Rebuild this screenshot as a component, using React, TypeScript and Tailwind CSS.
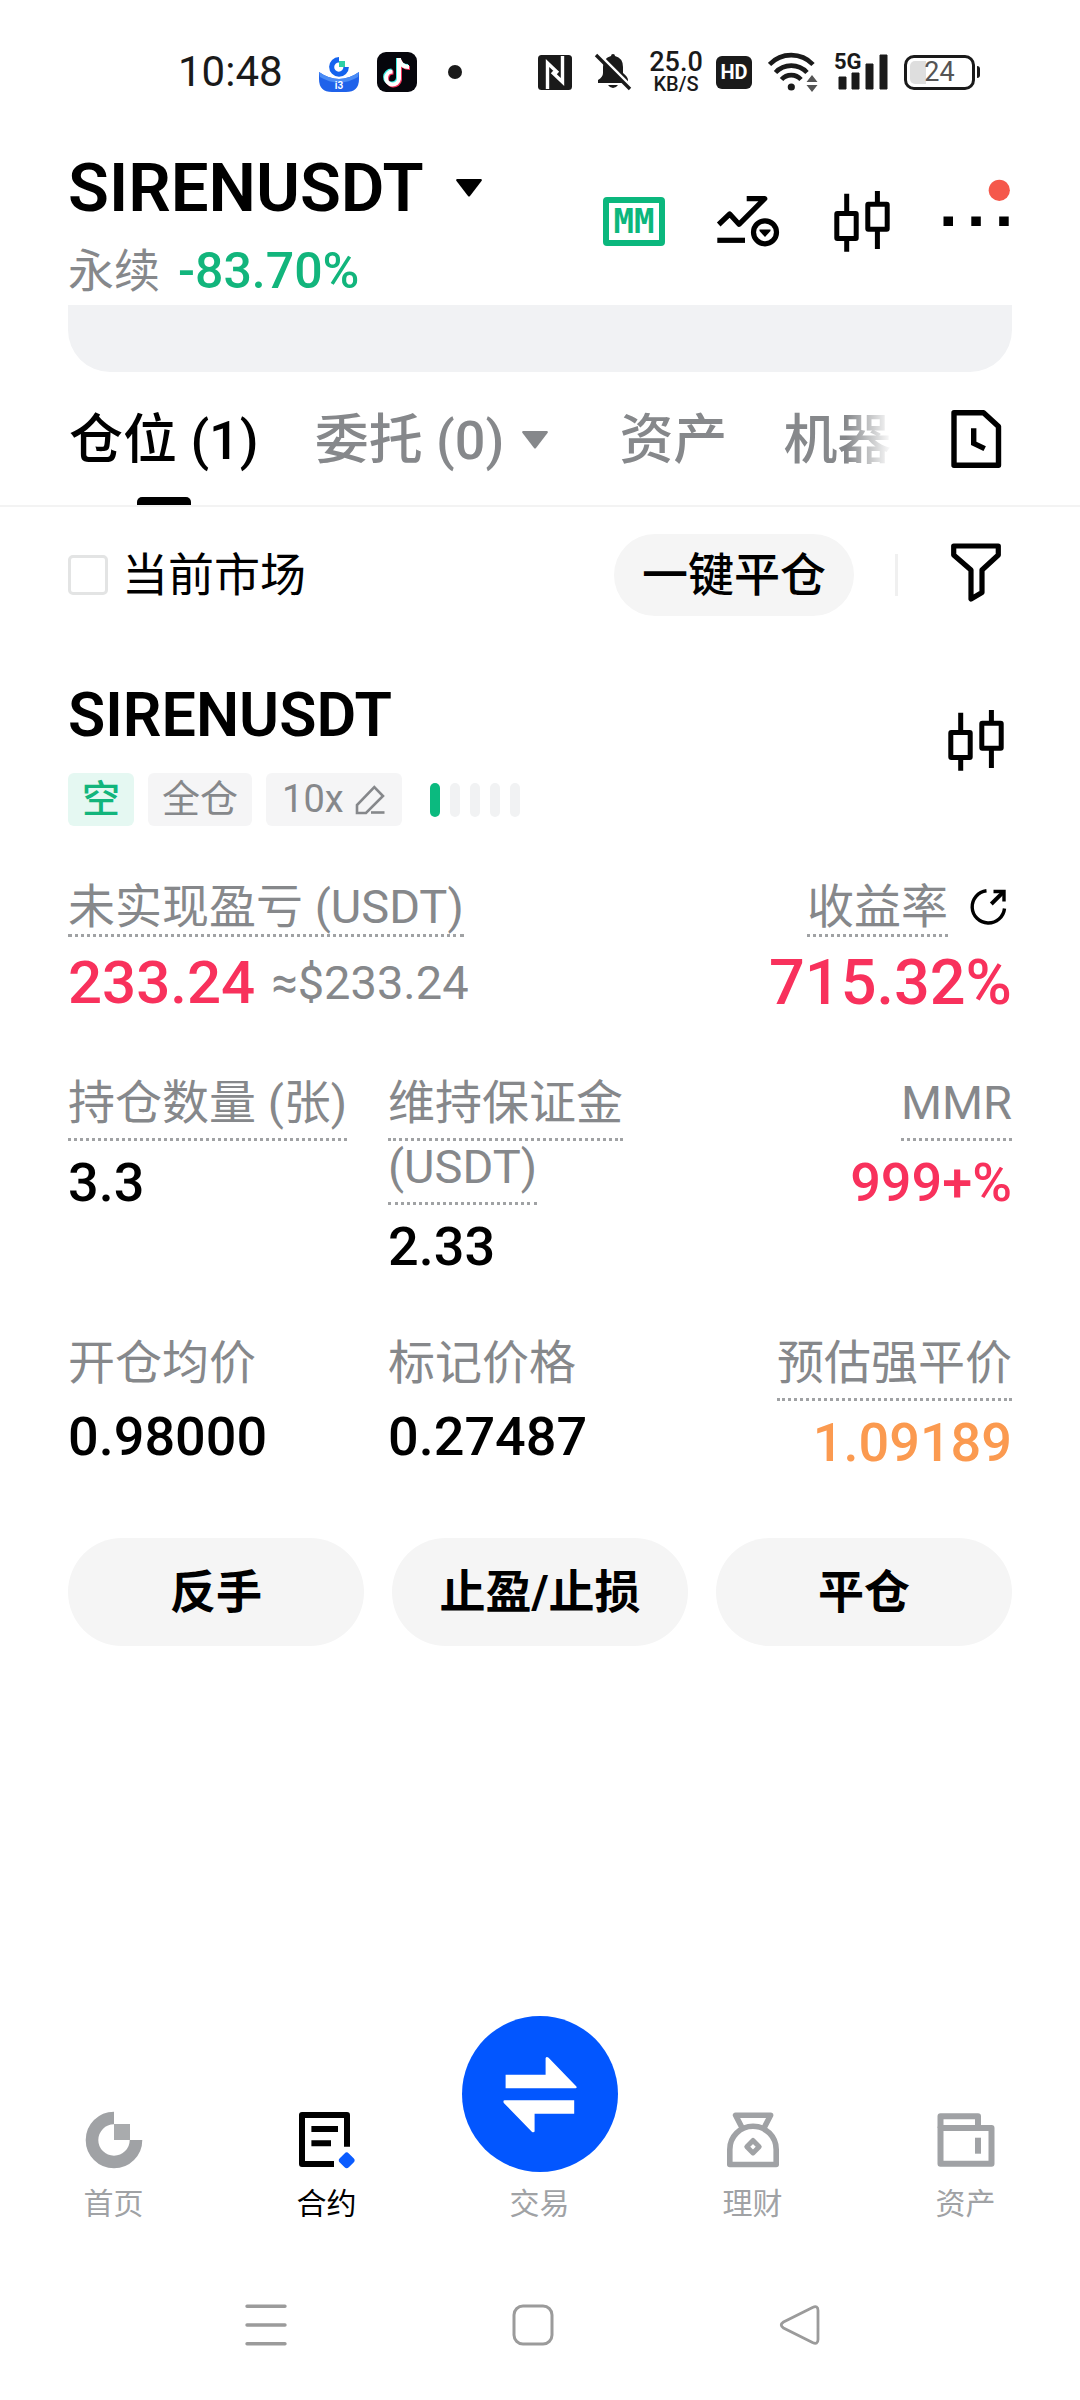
import React, { useState } from 'react';

interface StatProps {
  label: string;
  value: string;
  hint?: boolean;
  align?: 'left' | 'right';
  tone?: string;
}

const CandleIcon: React.FC = () => (
  <svg viewBox="0 0 72 72" className="w-18 h-18" fill="none" stroke="currentColor" strokeWidth="5">
    <rect x="10.8" y="28.5" width="19.4" height="25" rx="0.5" />
    <path d="M20.7 8.7V28M20.7 54V66.7" />
    <rect x="41.8" y="19.2" width="19.4" height="25" rx="0.5" />
    <path d="M51.4 6V19M51.4 44V64" />
  </svg>
);

const Caret: React.FC = () => (
  <svg viewBox="0 0 26 18" className="w-[26px] h-[18px] shrink-0" fill="currentColor">
    <path d="M1 0H25Q26.5 0.5 25.5 2L14 17Q13 18.2 12 17L0.5 2Q-0.5 0.5 1 0Z" />
  </svg>
);

function StatusBar() {
  return (
    <div className="flex items-center justify-between h-36 pl-[178px] pr-[100px] text-[#1a1a1a]">
      <div className="flex items-center">
        <span className="text-[42px] leading-none">10:48</span>
        <svg viewBox="0 0 40 40" className="w-10 h-10 ml-9 overflow-visible">
          <path d="M20 10.5V5A9.9 9.9 0 1 0 29.9 15H24.4A4.6 4.6 0 1 1 20 10.5Z" fill="#1463ee" />
          <rect x="20" y="9" width="6" height="6" fill="#2fd0a5" />
          <path d="M0 20Q20 34 40 20V27Q40 40 27 40H13Q0 40 0 27Z" fill="#1f62ea" />
          <path d="M0 20Q20 34 40 20L39 25Q20 36 1 25Z" fill="#4b8cf5" />
          <text x="20" y="37" fontSize="10" fontWeight="700" textAnchor="middle" fill="#fff">i3</text>
        </svg>
        <svg viewBox="0 0 40 40" className="w-10 h-10 ml-[18px]" fill="none">
          <rect width="40" height="40" rx="9" fill="#06060c" />
          <g strokeWidth="4">
            <path d="M21 6V26A6.5 6.5 0 1 1 14.5 18.5M21 7Q23 14 31 14" stroke="#3ff0e6" />
            <path d="M23 8V28A6.5 6.5 0 1 1 16.5 20.5M23 9Q25 16 33 16" stroke="#f5345c" />
            <path d="M22 6V27A6.5 6.5 0 1 1 15.5 19.5M22 7Q24 15 32 15" stroke="#fff" />
          </g>
        </svg>
        <span className="w-[14px] h-[14px] ml-[31px] rounded-full bg-[#1a1a1a]" />
      </div>

      <div className="flex items-center">
        {/* NFC */}
        <svg viewBox="0 0 34 35" className="w-[34px] h-[35px]" fill="none">
          <rect width="34" height="35" rx="3.5" fill="#1a1a1a" />
          <path d="M9.5 34V8L20 18M24.5 1V27L14 17" stroke="#fff" strokeWidth="3.4" />
        </svg>
        {/* Muted bell */}
        <svg viewBox="0 0 38 38" className="w-[38px] h-[38px] ml-[22px]" fill="#1a1a1a">
          <path d="M17 3Q17 1 19 1Q21 1 21 3Q29 5 29 14V20Q34 24 34 27V30H4V27Q9 24 9 20V14Q9 5 17 3ZM14 32H24Q22 35 19 35Q16 35 14 32Z" />
          <path d="M3 0L38 35" stroke="#fff" strokeWidth="4" />
          <path d="M2 2L36 36" stroke="#1a1a1a" strokeWidth="3.4" />
        </svg>
        <span className="flex flex-col items-center w-14 ml-4 font-medium">
          <span className="text-[27px] leading-[24px]">25.0</span>
          <span className="text-[20px] leading-[20px]">KB/S</span>
        </span>
        <span className="flex items-center justify-center w-9 h-[33px] ml-3 rounded-[6px] bg-[#1a1a1a] text-white text-[20px] font-bold leading-none">
          HD
        </span>
        {/* Wi-Fi */}
        <svg viewBox="0 0 50 40" className="w-[50px] h-10 ml-4" fill="none" stroke="#1a1a1a" strokeWidth="4.6">
          <path d="M1.5 12.5A30 30 0 0 1 45 12.5" />
          <path d="M7.5 20.5A21.5 21.5 0 0 1 39 20.5" />
          <path d="M13.5 27.5A13 13 0 0 1 33 27.5" />
          <circle cx="23.3" cy="35" r="3.6" fill="#1a1a1a" stroke="none" />
          <path d="M38.5 30L44 23L49.5 30ZM38.5 33L44 40L49.5 33Z" fill="#555" stroke="none" />
        </svg>
        <svg viewBox="0 0 54 40" className="w-[54px] h-10 ml-4 overflow-visible" fill="#1a1a1a">
          <text x="0" y="17" fontSize="22" fontWeight="700">5G</text>
          <path d="M5 25H12V37H5ZM18 21H25V37H18ZM32 12H39V37H32ZM46 3H53V37H46Z" stroke="#1a1a1a" strokeWidth="1" strokeLinejoin="round" />
        </svg>
        <span className="flex items-center ml-4">
          <span className="relative flex items-center justify-center w-[71px] h-[35px] rounded-[10px] border-[3px] border-[#1a1a1a]">
            <span className="absolute left-[3px] top-[3px] w-4 h-[23px] rounded-l-[5px] bg-[#dedede]" />
            <span className="relative text-[27px] leading-none text-[#555]">24</span>
          </span>
          <span className="w-[3px] h-3 ml-[2px] rounded-r bg-[#1a1a1a]" />
        </span>
      </div>
    </div>
  );
}

function Header() {
  return (
    <header>
      <div className="flex items-start justify-between px-[68px] h-[161px]">
        <div>
          <button className="flex items-center gap-8 text-[67px] leading-[88px] font-semibold">
            SIRENUSDT
            <Caret />
          </button>
          <div className="flex items-center gap-[18px] mt-[7px] text-[46px] leading-[64px]">
            <span className="text-[#86888b]">永续</span>
            <span className="text-[50px] font-medium text-[#12b57c]">-83.70%</span>
          </div>
        </div>
        <div className="flex items-center gap-[42px] mt-[41px]">
          <button aria-label="MM" className="flex items-center justify-center w-18 h-18">
            <span className="flex items-center justify-center w-[62px] h-[49px] rounded-[4px] border-6 border-[#0bb77d] text-[#0bb77d] text-[34px] leading-none font-bold font-['DejaVu_Sans_Mono',monospace]">
              MM
            </span>
          </button>
          <button aria-label="指标">
            <svg viewBox="0 0 72 72" className="w-18 h-18" fill="none" stroke="currentColor" strokeWidth="5.2">
              <path d="M6.7 39.5L17.7 29L27 39.3L52.7 13.7H34.7" strokeLinejoin="round" />
              <path d="M5.3 55.3H33" />
              <circle cx="53" cy="47.3" r="11.5" />
              <path d="M47.5 44.5H58.5V46L53 52L47.5 46Z" fill="currentColor" stroke="none" />
            </svg>
          </button>
          <button aria-label="K线">
            <CandleIcon />
          </button>
          <button aria-label="更多">
            <svg viewBox="0 0 72 72" className="w-18 h-18 overflow-visible" fill="currentColor">
              <path d="M3.5 31.5H13V41H3.5ZM31.3 31.5H40.8V41H31.3ZM59.2 31.5H68.7V41H59.2Z" />
              <circle cx="59.3" cy="5.3" r="10.6" fill="#f5584b" />
            </svg>
          </button>
        </div>
      </div>
      <div className="h-[67px] mx-[68px] rounded-b-[42px] bg-[#f1f2f4]" />
    </header>
  );
}

function Tabs() {
  return (
    <nav className="flex items-center h-[135px] pl-[69px] pr-[68px] border-b-2 border-[#f3f3f3] text-[54px] text-[#86888b]">
      <div className="relative flex flex-1 items-center h-full pt-[3px] overflow-hidden whitespace-nowrap">
        <button className="relative h-full shrink-0 text-black font-medium">
          仓位 (1)
          <span className="absolute bottom-0 left-1/2 -translate-x-1/2 w-[54px] h-2 rounded-t-[5px] bg-black" />
        </button>
        <button className="flex items-center shrink-0 gap-[18px] ml-14 font-medium">
          委托 (0)
          <Caret />
        </button>
        <button className="shrink-0 ml-[71px] font-medium">资产</button>
        <button className="shrink-0 ml-14 font-medium">机器</button>
        <span className="absolute right-0 top-0 w-[46px] h-full bg-linear-to-r from-white/0 to-white" />
      </div>
      <button aria-label="历史记录" className="ml-12 text-black">
        <svg viewBox="0 0 72 72" className="w-18 h-18" fill="none" stroke="currentColor" strokeWidth="5.4">
          <path d="M14 9.7H43.5L58.5 23.5V62.3H14Z" strokeLinejoin="round" />
          <path d="M33.7 25.3V40.3L44.7 45.7" />
        </svg>
      </button>
    </nav>
  );
}

function FilterRow() {
  const [onlyCurrent, setOnlyCurrent] = useState(false);

  return (
    <div className="flex items-center px-[68px] pt-[27px] text-[46px]">
      <label className="flex items-center gap-[14px]">
        <input
          type="checkbox"
          checked={onlyCurrent}
          onChange={(e) => setOnlyCurrent(e.target.checked)}
          className="appearance-none w-10 h-10 rounded-[5px] border-3 border-[#e3e4e4] checked:bg-black"
        />
        当前市场
      </label>
      <button className="ml-auto h-[82px] px-[28px] rounded-full bg-[#f5f5f5] font-medium">一键平仓</button>
      <span className="w-[3px] h-[42px] ml-[41px] bg-[#f0f0f0]" />
      <button aria-label="筛选" className="ml-[42px]">
        <svg viewBox="0 0 72 72" className="w-18 h-18" fill="none" stroke="currentColor" strokeWidth="5.2" strokeLinejoin="round">
          <path d="M13.7 7H58.3V16L42 31V53.5L31 60V31L13.7 16Z" />
        </svg>
      </button>
    </div>
  );
}

const Stat: React.FC<StatProps> = ({ label, value, hint, align = 'left', tone = 'text-black' }) => (
  <div className={align === 'right' ? 'text-right' : 'text-left'}>
    <div className="text-[47px] leading-[64px] text-[#86888b]">
      <span className={hint ? 'pb-2 border-b-3 border-dotted border-[#a0a2a4]' : ''}>{label}</span>
    </div>
    <div className={`${hint ? 'mt-4' : 'mt-[10px]'} text-[54px] leading-[64px] font-medium ${tone}`}>{value}</div>
  </div>
);

function PositionCard() {
  return (
    <section className="px-[68px] mt-[57px]">
      <div className="flex items-start justify-between">
        <div>
          <h2 className="text-[61px] leading-[84px] font-semibold">SIRENUSDT</h2>
          <div className="flex items-center mt-4 text-[38px] leading-[53px] text-[#86888b]">
            <span className="px-[14px] rounded-[6px] bg-[#e5f8f2] text-[#12b57c] font-medium">空</span>
            <span className="ml-[14px] px-[14px] rounded-[6px] bg-[#f5f5f6]">全仓</span>
            <button className="flex items-center gap-[10px] ml-[14px] px-4 rounded-[6px] bg-[#f5f5f6]">
              10x
              <svg viewBox="0 0 32 32" className="w-8 h-8" fill="none" stroke="currentColor" strokeWidth="2.6">
                <path d="M3 29V21L20.3 3L29 12L12 29Z" />
                <path d="M17 28.5H30.5" />
              </svg>
            </button>
            <span className="flex gap-[10px] ml-[28px]">
              <span className="w-[10px] h-[34px] rounded-full bg-[#0bba7f]" />
              {[1, 2, 3, 4].map((i) => (
                <span key={i} className="w-[10px] h-[34px] rounded-full bg-[#f1f2f3]" />
              ))}
            </span>
          </div>
        </div>
        <button aria-label="K线" className="mt-[31px]">
          <CandleIcon />
        </button>
      </div>

      <div className="flex justify-between mt-[49px]">
        <div>
          <div className="text-[47px] leading-[64px] text-[#86888b]">
            <span className="border-b-3 border-dotted border-[#a0a2a4]">未实现盈亏 (USDT)</span>
          </div>
          <div className="flex items-center gap-4 mt-2 text-[60px] leading-[72px] font-medium text-[#f8315c]">
            233.24
            <span className="text-[47px] font-normal text-[#86888b]">≈$233.24</span>
          </div>
        </div>
        <div className="text-right">
          <div className="flex items-center justify-end gap-5 text-[47px] leading-[64px] text-[#86888b]">
            <span>
              <span className="border-b-3 border-dotted border-[#a0a2a4]">收益率</span>
            </span>
            <button aria-label="分享" className="text-black">
              <svg viewBox="0 0 44 44" className="w-11 h-11" fill="none" stroke="currentColor" strokeWidth="3.4">
                <path d="M36.5 23.5A16.2 16.2 0 1 1 18.5 5.7" />
                <path d="M23.3 19L35 7.3" strokeWidth="4" />
                <path d="M25.5 6.5H36V16.5" />
              </svg>
            </button>
          </div>
          <div className="mt-2 text-[63px] leading-[72px] font-medium text-[#f8315c]">715.32%</div>
        </div>
      </div>

      <div className="grid grid-cols-3 gap-x-4 gap-y-[52px] mt-[52px]">
        <Stat label="持仓数量 (张)" value="3.3" hint />
        <Stat label="维持保证金 (USDT)" value="2.33" hint />
        <Stat label="MMR" value="999+%" hint align="right" tone="text-[#f8315c]" />
        <Stat label="开仓均价" value="0.98000" />
        <Stat label="标记价格" value="0.27487" />
        <Stat label="预估强平价" value="1.09189" hint align="right" tone="text-[#fb9a50]" />
      </div>

      <div className="grid grid-cols-3 gap-7 mt-[63px] text-[46px] font-bold">
        <button className="h-27 rounded-full bg-[#f5f5f5]">反手</button>
        <button className="h-27 rounded-full bg-[#f5f5f5]">止盈/止损</button>
        <button className="h-27 rounded-full bg-[#f5f5f5]">平仓</button>
      </div>
    </section>
  );
}

function BottomNav() {
  const item = 'flex flex-col items-center gap-3';

  return (
    <nav className="grid grid-cols-5 items-end mt-auto pl-[7px] pr-2 pb-[26px] text-[30px] leading-[40px] text-[#a0a2a5]">
      <a href="#home" className={item}>
        <svg viewBox="0 0 64 64" className="w-16 h-16" fill="none">
          <path d="M32 10A22 22 0 1 0 54 32" stroke="currentColor" strokeWidth="12.6" />
          <rect x="32" y="16" width="16" height="16" fill="#a9abad" />
        </svg>
        首页
      </a>
      <a href="#futures" className={`${item} text-black`}>
        <svg viewBox="0 0 64 64" className="w-16 h-16" fill="none" stroke="currentColor" strokeWidth="6">
          <path d="M52 38.7V7H7V56H39" strokeLinejoin="round" />
          <path d="M16.4 21H43M16.4 35.3H36" />
          <path d="M51.7 47.5L56.5 52.3L51.7 57.1L46.9 52.3Z" fill="#0b5cff" stroke="#0b5cff" strokeLinejoin="round" />
        </svg>
        合约
      </a>
      <a href="#trade" className={item}>
        <svg viewBox="0 0 156 156" className="w-39 h-39 rounded-full bg-[#0256ff]" fill="#fff">
          <path d="M43.6 58.7H83.6V42Q84.6 40 86.6 41.8L114.4 70.5Q115.2 72.3 113.5 72.3H43.6Z" />
          <path d="M112.2 84.3V97.7H72.6V115.5Q71.6 117 69.8 115.7L41.8 87Q40.7 84.3 42.7 84.3Z" />
        </svg>
        交易
      </a>
      <a href="#earn" className={item}>
        <svg viewBox="0 0 64 64" className="w-16 h-16" fill="none" stroke="currentColor" strokeWidth="5.6" strokeLinejoin="round">
          <path d="M8.8 56.5V41.5A23.2 23.2 0 0 1 55.2 41.5V56.5Z" />
          <path d="M20.8 19.3L14.6 7.3H49.6L43.4 19.3" />
          <path d="M32 32.5L38.2 38.7L32 44.9L25.8 38.7Z" strokeWidth="5" />
        </svg>
        理财
      </a>
      <a href="#assets" className={item}>
        <svg viewBox="0 0 64 64" className="w-16 h-16" fill="none" stroke="currentColor" strokeWidth="6" strokeLinejoin="round">
          <path d="M6.5 20V8.3H44V20" />
          <rect x="6.5" y="20" width="51" height="35.7" />
          <path d="M44 29.7V45.7" />
        </svg>
        资产
      </a>
    </nav>
  );
}

function SystemNav() {
  return (
    <div className="grid grid-cols-3 h-[150px] pl-[132px] pr-[147px] items-center justify-items-center text-[#9b9b9b]">
      <button aria-label="最近任务">
        <svg viewBox="0 0 48 48" className="w-12 h-12" fill="none" stroke="currentColor" strokeWidth="3.4" strokeLinecap="round">
          <path d="M5 5.3H43M5 24H43M5 42.7H43" />
        </svg>
      </button>
      <button aria-label="主屏幕">
        <svg viewBox="0 0 48 48" className="w-12 h-12" fill="none" stroke="currentColor" strokeWidth="3">
          <rect x="5" y="5" width="38" height="38" rx="9" />
        </svg>
      </button>
      <button aria-label="返回">
        <svg viewBox="0 0 48 48" className="w-12 h-12" fill="none" stroke="currentColor" strokeWidth="2.8">
          <path d="M36.5 6.5Q42 4 42 9.5V38.5Q42 44 36.5 41.5L7.5 27Q3 24 7.5 21Z" />
        </svg>
      </button>
    </div>
  );
}

export default function App() {
  return (
    <div className="flex flex-col min-h-screen bg-white text-black font-['Roboto','Noto_Sans_CJK_SC',sans-serif]">
      <StatusBar />
      <Header />
      <Tabs />
      <FilterRow />
      <PositionCard />
      <BottomNav />
      <SystemNav />
    </div>
  );
}
